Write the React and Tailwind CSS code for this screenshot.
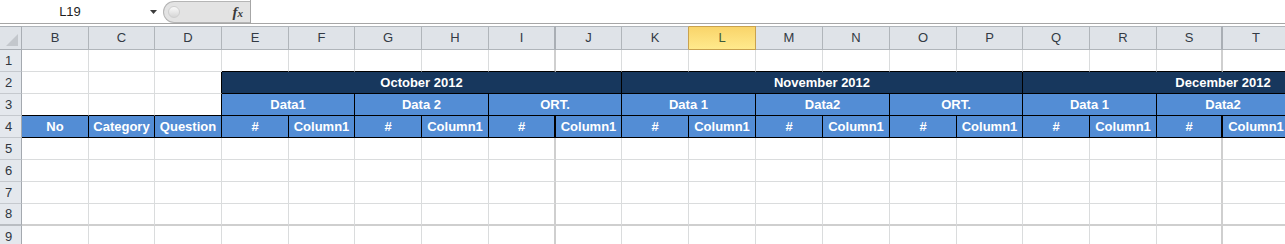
import React from "react";

const letters = ["B", "C", "D", "E", "F", "G", "H", "I", "J", "K", "L", "M", "N", "O", "P", "Q", "R", "S", "T", "U", "V"];
const breakCols = ["I", "S"];

const grid =
  "grid grid-cols-[22px_67px_66px_67px_67px_66px_67px_67px_67px_66px_67px_67px_67px_67px_67px_66px_67px_67px_66px_67px_67px_67px]";

const months = ["October 2012", "November 2012", "December 2012"];
const subHeads = ["Data1", "Data 2", "ORT.", "Data 1", "Data2", "ORT.", "Data 1", "Data2", "ORT."];

const RowHead = ({ n, thick }) => (
  <div
    className={
      "flex h-[22px] items-center pl-[5px] bg-[#e4e8ed] border-r border-[#a4a9af] text-[13px] text-[#2f3640] " +
      (thick ? "border-b-2 border-b-[#b9bdc2]" : "border-b border-b-[#c5c9ce]")
    }
  >
    {n}
  </div>
);

const Blank = ({ col, black, thick }) => {
  let cls = "h-[22px] bg-white ";
  cls += breakCols.includes(col) ? "border-r-2 border-r-[#cfcfcf] " : "border-r border-r-[#dadcdd] ";
  if (black) cls += "border-b border-b-black";
  else if (thick) cls += "border-b-2 border-b-[#cfcfcf]";
  else cls += "border-b border-b-[#dadcdd]";
  return <div className={cls}></div>;
};

const BodyRow = ({ n, thick }) => (
  <>
    <RowHead n={n} thick={thick} />
    {letters.map((c) => (
      <Blank key={c} col={c} thick={thick} />
    ))}
  </>
);

export default function App() {
  return (
    <div className="w-[1285px] h-[244px] overflow-hidden bg-white font-['Liberation_Sans',sans-serif]">
      {/* formula bar */}
      <div className="flex h-[24px] border-b border-[#a6a6a6] bg-white">
        <div className="flex w-[163px] items-center">
          <span className="w-[140px] text-center text-[13px] text-[#1e1e1e]">L19</span>
          <svg width="7" height="4" viewBox="0 0 7 4" className="ml-[10px]">
            <path d="M0 0h7L3.5 4z" fill="#3c3c3c" />
          </svg>
        </div>
        <div className="mt-[1px] flex h-[22px] w-[87px] items-center rounded-l-full border border-r-0 border-[#b5b5b5] bg-[#e3e3e3]">
          <div className="ml-[4px] h-[12px] w-[12px] rounded-full border border-[#cfcfcf] bg-linear-to-b from-[#fafafa] to-[#d6d6d6]"></div>
          <span className="ml-auto mr-[7px] font-['Liberation_Serif',serif] italic font-bold text-[15px] leading-none text-[#3a3a3a]">
            f<span className="text-[11px]">x</span>
          </span>
        </div>
        <div className="flex-1 border-l border-[#a6a6a6]"></div>
      </div>
      <div className="h-[2px]"></div>

      <div className={grid + " w-[1424px]"}>
        {/* column headers */}
        <div className="relative h-[24px] border-t border-b border-r border-[#a9aeb4] bg-[#dfe3e8]">
          <svg width="12" height="12" viewBox="0 0 12 12" className="absolute right-[3px] bottom-[3px]">
            <path d="M12 0V12H0z" fill="#c3c7cc" />
          </svg>
        </div>
        {letters.map((c) =>
          c === "L" ? (
            <div
              key={c}
              className="flex h-[24px] items-center justify-center border-t border-b border-r border-t-[#c9a24e] border-b-[#c9a24e] border-r-[#c9a24e] bg-linear-to-b from-[#f9d46a] to-[#ffea8c] text-[13px] text-[#3d5a3a]"
            >
              {c}
            </div>
          ) : (
            <div
              key={c}
              className={
                "flex h-[24px] items-center justify-center border-t border-b border-[#b0b5ba] bg-[#dfe3e8] text-[13px] text-[#333a44] " +
                (c === "K"
                  ? "border-r border-r-[#c9a24e]"
                  : breakCols.includes(c)
                  ? "border-r-2 border-r-[#a9aeb4]"
                  : "border-r border-r-[#b0b5ba]")
              }
            >
              {c}
            </div>
          )
        )}

        {/* row 1 */}
        <RowHead n={1} />
        {letters.map((c, i) => (
          <Blank key={c} col={c} black={i >= 3} />
        ))}

        {/* row 2 */}
        <RowHead n={2} />
        <div className="h-[22px] border-r border-b border-[#dadcdd]"></div>
        <div className="h-[22px] border-r border-b border-[#dadcdd]"></div>
        <div className="h-[22px] border-b border-r border-b-[#dadcdd] border-r-black"></div>
        {months.map((m) => (
          <div
            key={m}
            className="col-span-6 flex h-[22px] items-center justify-center border-r border-b border-black bg-[#17375d] text-[13px] font-bold text-white"
          >
            {m}
          </div>
        ))}

        {/* row 3 */}
        <RowHead n={3} />
        <div className="h-[22px] border-r border-b border-r-[#dadcdd] border-b-black"></div>
        <div className="h-[22px] border-r border-b border-r-[#dadcdd] border-b-black"></div>
        <div className="h-[22px] border-r border-b border-black"></div>
        {subHeads.map((s, i) => (
          <div
            key={i}
            className="col-span-2 flex h-[22px] items-center justify-center border-r border-b border-black bg-[#538dd5] text-[13px] font-bold text-white"
          >
            {s}
          </div>
        ))}

        {/* row 4 */}
        <RowHead n={4} />
        {letters.map((c, i) => {
          let text;
          if (i === 0) text = "No";
          else if (i === 1) text = "Category";
          else if (i === 2) text = "Question";
          else text = i % 2 === 1 ? "#" : "Column1";
          return (
            <div
              key={c}
              className={
                "flex h-[22px] items-center justify-center border-b border-black bg-[#538dd5] text-[13px] font-bold text-white whitespace-nowrap overflow-hidden " +
                (breakCols.includes(c) ? "border-r-2" : "border-r")
              }
            >
              {text}
            </div>
          );
        })}

        <BodyRow n={5} />
        <BodyRow n={6} />
        <BodyRow n={7} />
        <BodyRow n={8} thick />
        <BodyRow n={9} />
      </div>
    </div>
  );
}
